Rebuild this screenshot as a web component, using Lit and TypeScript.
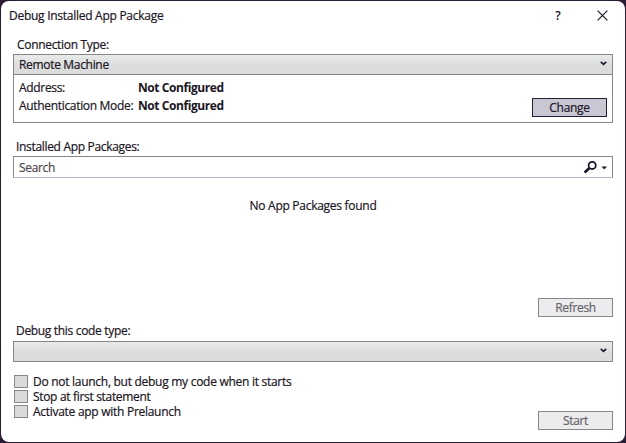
import { LitElement, html, css, svg } from "lit";
import { customElement } from "lit/decorators.js";

const chevron = html`<svg class="chevron" width="7" height="5" viewBox="0 0 7 5">
  ${svg`<path d="M0.8 0.8 L3.5 3.3 L6.2 0.8" fill="none" stroke="#1e1628" stroke-width="1.7" />`}
</svg>`;

@customElement("app-root")
export class AppRoot extends LitElement {
  static styles = css`
    :host {
      display: block;
      width: 626px;
      height: 443px;
      background: #2a1d33;
      font: 12px/16px "Open Sans", "Noto Sans", sans-serif;
      color: #1b1524;
      overflow: hidden;
    }
    * { box-sizing: border-box; }
    .window {
      display: flex;
      flex-direction: column;
      width: 624px;
      height: 441px;
      margin: 1px;
      padding: 0 12px;
      background: #fff;
      border-radius: 8px;
      float: left;
    }
    span { white-space: nowrap; }
    .t-title { letter-spacing: -0.27px; -webkit-text-stroke: 0.2px; }
    .t-body { letter-spacing: -0.32px; -webkit-text-stroke: 0.2px; }
    .t-long { letter-spacing: -0.28px; }
    .t-bold { font-weight: 700; letter-spacing: -0.43px; }
    .titlebar {
      display: flex;
      align-items: center;
      height: 30px;
      margin: 0 -4px;
    }
    .titlebar .t-title { flex: 1; }
    .help { font-weight: 600; width: 8px; margin-right: 35px; text-align: center; }
    .close { display: block; margin-right: 9px; margin-top: -2px; }
    .label { height: 17px; padding-left: 3px; }
    .first { margin-top: 6px; padding-left: 4px; }
    .combo {
      display: flex;
      align-items: center;
      justify-content: space-between;
      height: 21px;
      width: 600px;
      padding: 1px 5px 0;
      border: 1px solid #898589;
      background: linear-gradient(#e9ebea, #dcdedd 55%, #dadcdb);
    }
    .chevron { display: block; margin-top: -3px; }
    .panel {
      display: flex;
      justify-content: space-between;
      align-items: flex-end;
      width: 600px;
      height: 48px;
      padding: 0 5px 5px;
      border: 1px solid #898589;
      border-top: 0;
    }
    .facts {
      display: grid;
      grid-template-columns: 119px auto;
      grid-auto-rows: 18px;
      align-self: flex-start;
      padding-top: 5px;
    }
    .button {
      display: flex;
      align-items: center;
      justify-content: center;
      width: 75px;
      height: 19px;
      border: 1px solid #898589;
      background: #ececee;
      color: #66636a;
    }
    .button.active { border-color: #2a1d33; background: #c8c7d3; color: #1b1524; }
    .packages { margin-top: 16px; }
    .search {
      display: flex;
      align-items: center;
      height: 22px;
      width: 600px;
      padding: 1px 4px 0 5px;
      border: 1px solid #898589;
      border-bottom-color: #bcbac8;
      color: #4a4650;
    }
    .search span { flex: 1; }
    .search svg { display: block; }
    .empty { height: 120px; padding-top: 20px; text-align: center; }
    .right { align-self: flex-end; }
    .code { margin-top: 6px; margin-bottom: 1px; }
    .footer { display: flex; justify-content: space-between; margin-top: 13px; }
    .checks { display: flex; flex-direction: column; gap: 2px; padding-left: 1px; }
    .check { display: flex; align-items: center; gap: 5px; height: 13px; line-height: 13px; }
    .box { width: 14px; height: 13px; border: 1px solid #898589; background: #d9dad9; }
    .start { margin-top: 36px; }
  `;

  render() {
    return html`
      <div class="window">
        <div class="titlebar">
          <span class="t-title">Debug Installed App Package</span>
          <span class="help">?</span>
          <svg class="close" width="11" height="11" viewBox="0 0 11 11">
            <path d="M0.6 0.6 L10.4 10.4 M10.4 0.6 L0.6 10.4" stroke="#1e1628" stroke-width="1.2" />
          </svg>
        </div>
        <div class="label first"><span class="t-body">Connection Type:</span></div>
        <div class="combo"><span class="t-body">Remote Machine</span>${chevron}</div>
        <div class="panel">
          <div class="facts">
            <span class="t-body">Address:</span><span class="t-bold">Not Configured</span>
            <span class="t-body">Authentication Mode:</span><span class="t-bold">Not Configured</span>
          </div>
          <div class="button active"><span class="t-body">Change</span></div>
        </div>
        <div class="label packages"><span class="t-body">Installed App Packages:</span></div>
        <div class="search">
          <span class="t-body">Search</span>
          <svg width="25" height="13" viewBox="0 0 25 13">
            <circle cx="9.2" cy="4.4" r="3.6" fill="none" stroke="#1e1628" stroke-width="1.8" />
            <path d="M6.5 7.1 L1.6 11.6" stroke="#1e1628" stroke-width="2.7" />
            <path d="M18.5 5.5 H24 L21.25 8.5 Z" fill="#1e1628" />
          </svg>
        </div>
        <div class="empty"><span class="t-body t-long">No App Packages found</span></div>
        <div class="button right"><span class="t-body">Refresh</span></div>
        <div class="label code"><span class="t-body">Debug this code type:</span></div>
        <div class="combo"><span></span>${chevron}</div>
        <div class="footer">
          <div class="checks">
            <div class="check"><i class="box"></i><span class="t-body t-long">Do not launch, but debug my code when it starts</span></div>
            <div class="check"><i class="box"></i><span class="t-body">Stop at first statement</span></div>
            <div class="check"><i class="box"></i><span class="t-body t-long">Activate app with Prelaunch</span></div>
          </div>
          <div class="button start"><span class="t-body">Start</span></div>
        </div>
      </div>
    `;
  }
}
